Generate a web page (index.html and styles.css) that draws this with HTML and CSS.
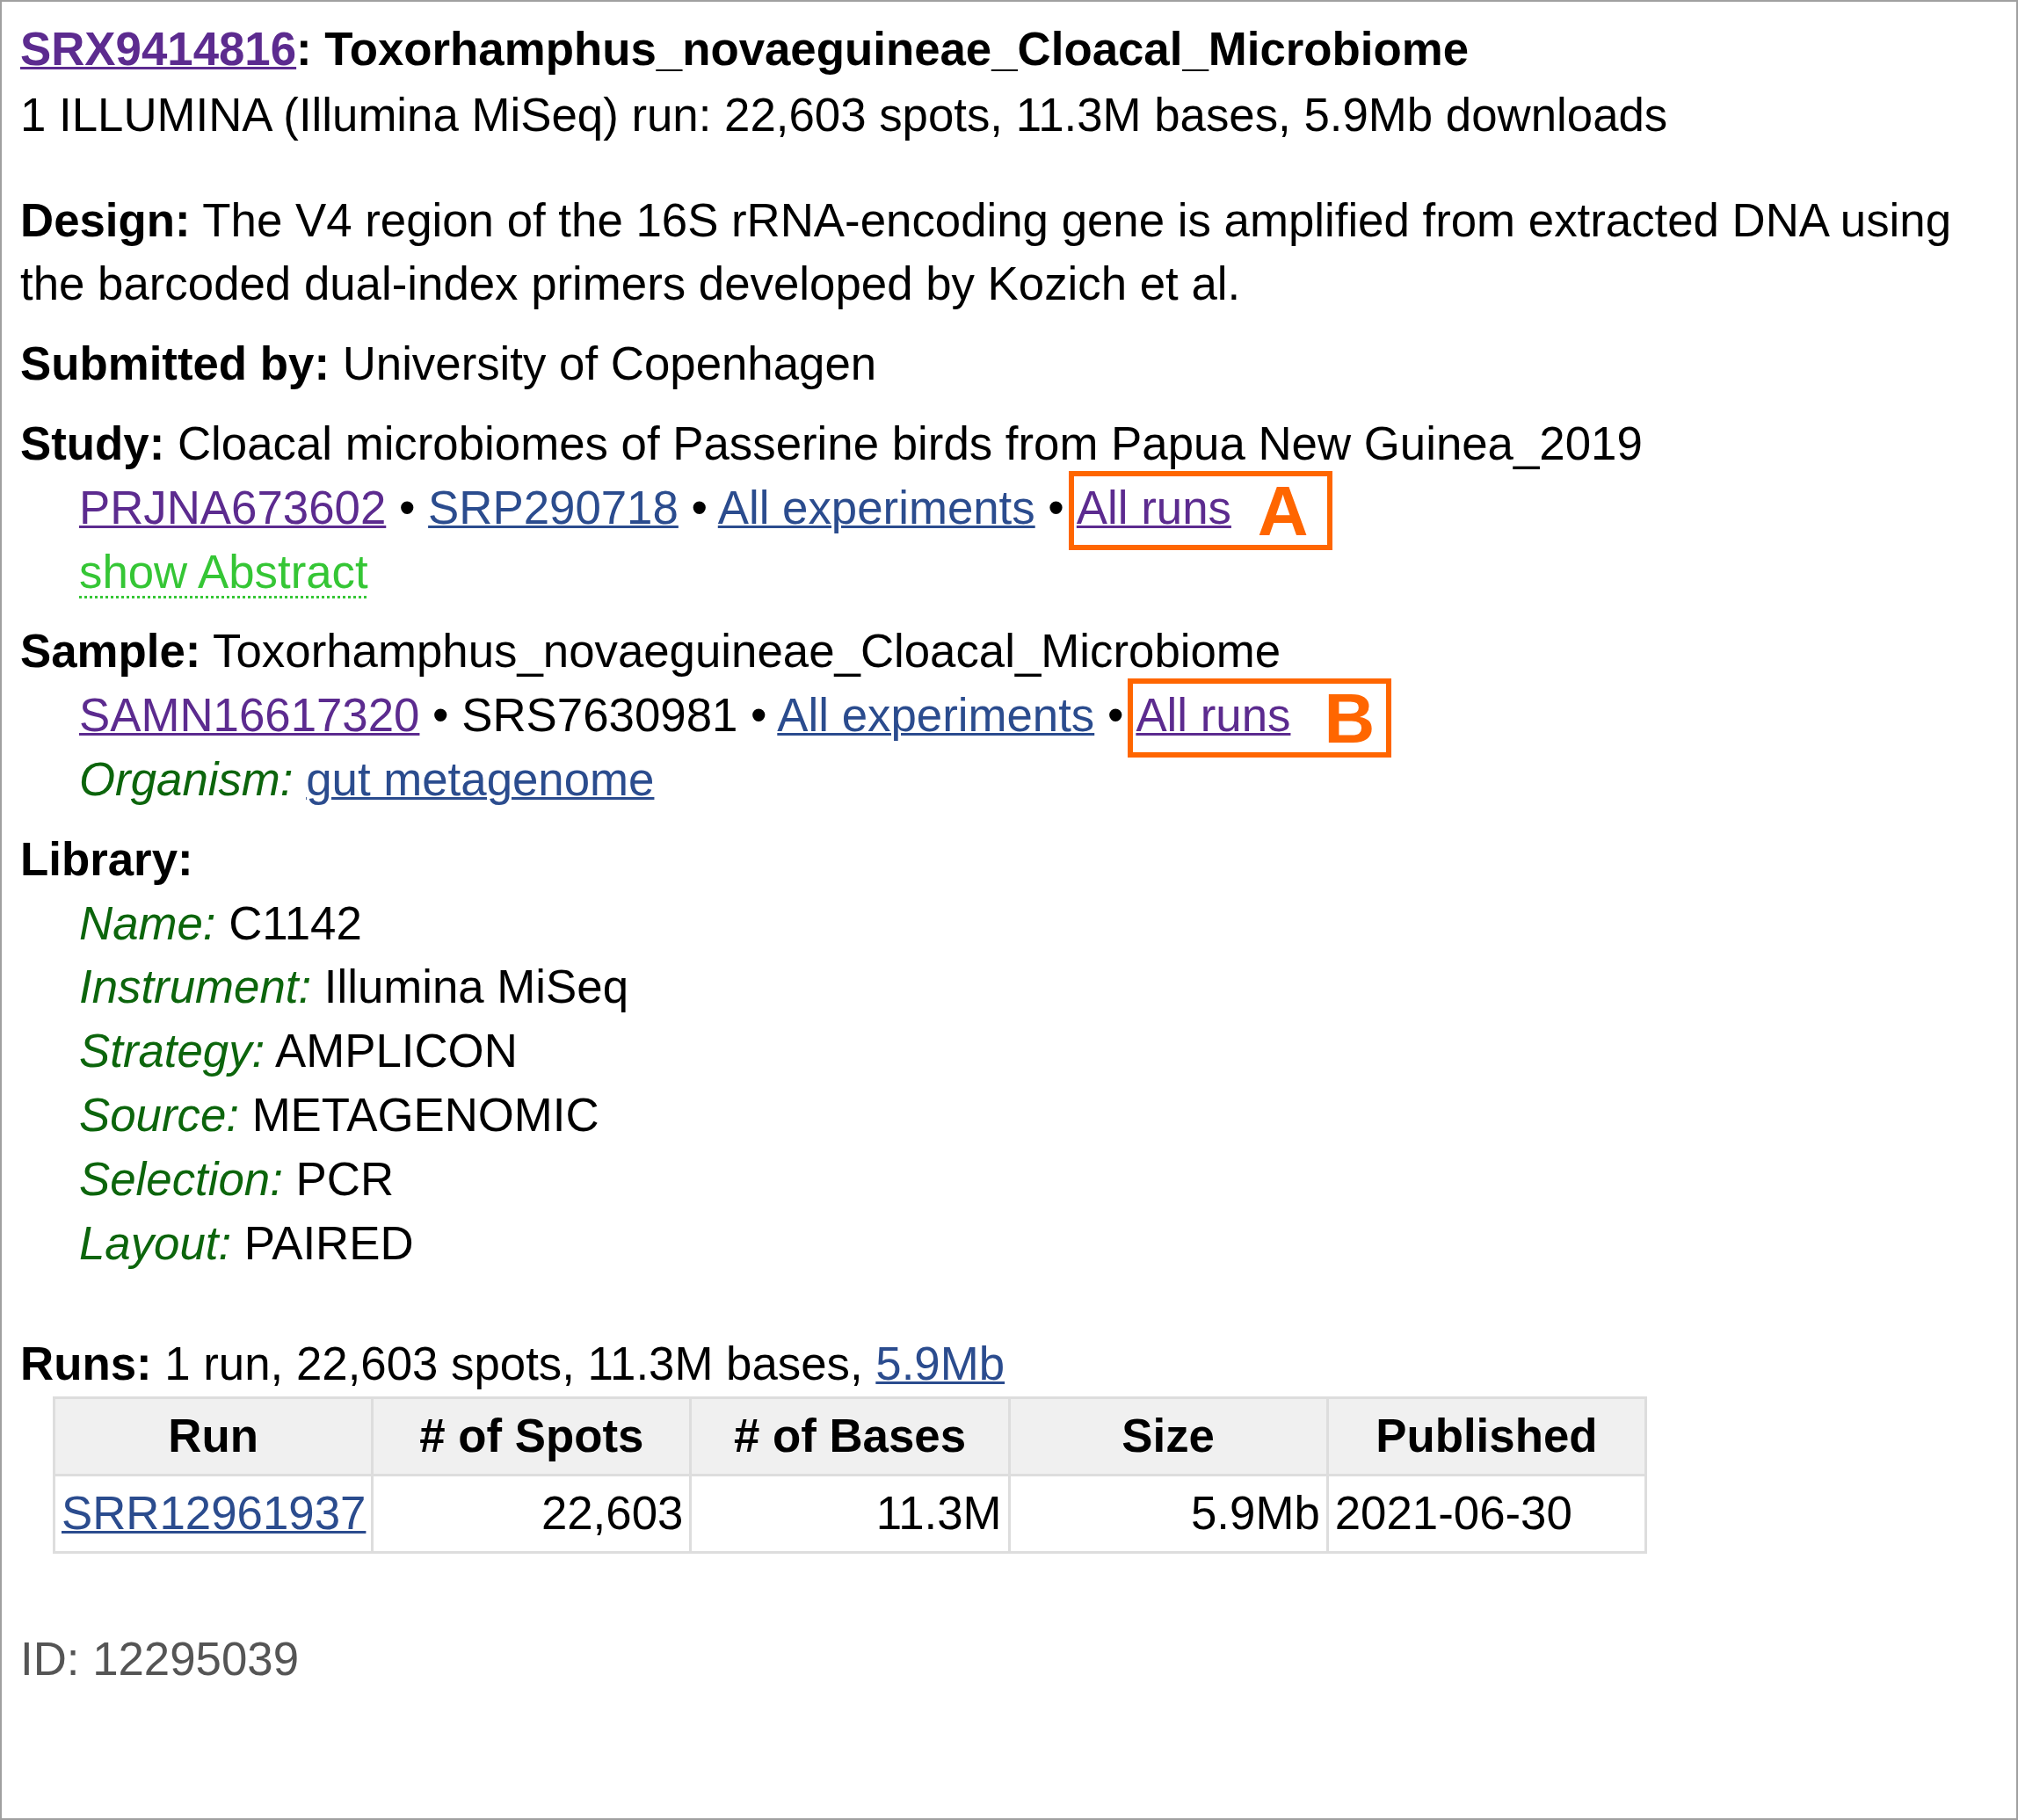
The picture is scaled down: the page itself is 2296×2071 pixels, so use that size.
FILE: index.html
```html
<!DOCTYPE html>
<html lang="en">
<head>
<meta charset="utf-8">
<title>SRX9414816: Toxorhamphus_novaeguineae_Cloacal_Microbiome</title>
<link rel="stylesheet" href="styles.css">
</head>
<body>
<div class="page">
  <div class="title"><a class="visited" href="#">SRX9414816</a>: Toxorhamphus_novaeguineae_Cloacal_Microbiome</div>
  <div class="summary">1 ILLUMINA (Illumina MiSeq) run: 22,603 spots, 11.3M bases, 5.9Mb downloads</div>

  <div class="field design"><b>Design:</b> The V4 region of the 16S rRNA-encoding gene is amplified from extracted DNA using the barcoded dual-index primers developed by Kozich et al.</div>

  <div class="field"><b>Submitted by:</b> University of Copenhagen</div>

  <div class="field">
    <div><b>Study:</b> Cloacal microbiomes of Passerine birds from Papua New Guinea_2019</div>
    <div class="sub"><a class="visited" href="#">PRJNA673602</a> • <a href="#">SRP290718</a> • <a href="#">All experiments</a> •<span class="mark mark-a"><a class="visited" href="#">All runs</a><span class="tag">A</span></span></div>
    <div class="sub"><a class="abstract" href="#">show Abstract</a></div>
  </div>

  <div class="field">
    <div><b>Sample:</b> Toxorhamphus_novaeguineae_Cloacal_Microbiome</div>
    <div class="sub"><a class="visited" href="#">SAMN16617320</a> • SRS7630981 • <a href="#">All experiments</a> •<span class="mark mark-b"><a class="visited" href="#">All runs</a><span class="tag">B</span></span></div>
    <div class="sub"><i class="key">Organism:</i> <a href="#">gut metagenome</a></div>
  </div>

  <div class="field">
    <div><b>Library:</b></div>
    <div class="sub"><i class="key">Name:</i> C1142</div>
    <div class="sub"><i class="key">Instrument:</i> Illumina MiSeq</div>
    <div class="sub"><i class="key">Strategy:</i> AMPLICON</div>
    <div class="sub"><i class="key">Source:</i> METAGENOMIC</div>
    <div class="sub"><i class="key">Selection:</i> PCR</div>
    <div class="sub"><i class="key">Layout:</i> PAIRED</div>
  </div>

  <div class="runs"><b>Runs:</b> 1 run, 22,603 spots, 11.3M bases, <a href="#">5.9Mb</a></div>
  <table class="run-table">
    <thead>
      <tr><th>Run</th><th># of Spots</th><th># of Bases</th><th>Size</th><th>Published</th></tr>
    </thead>
    <tbody>
      <tr><td><a href="#">SRR12961937</a></td><td class="num">22,603</td><td class="num">11.3M</td><td class="num">5.9Mb</td><td>2021-06-30</td></tr>
    </tbody>
  </table>

  <div class="uid">ID: 12295039</div>
</div>
</body>
</html>
```

FILE: styles.css
```css
html, body {
  margin: 0;
  padding: 0;
  background: #ffffff;
}

.page {
  box-sizing: border-box;
  width: 2296px;
  min-height: 2071px;
  border: 2px solid #a0a0a0;
  padding: 18px 21px 20px 21px;
  font-family: "Liberation Sans", Arial, sans-serif;
  font-size: 52.8px;
  line-height: 72.8px;
  color: #000000;
}

a {
  color: #2b4c8e;
  text-decoration: underline;
  text-decoration-thickness: 3px;
}

a.visited {
  color: #5c2b8f;
}

.title {
  font-weight: bold;
  margin-bottom: 2px;
}

.field {
  margin-top: 18px;
}

.design {
  margin-top: 47px;
}

.sub {
  padding-left: 67px;
}

.key {
  color: #0c650c;
}

a.abstract {
  color: #35c635;
  text-decoration: underline dotted;
  text-decoration-thickness: 3px;
  text-underline-offset: 9px;
}

.mark {
  position: relative;
  margin-left: 14px;
}

.mark::before {
  content: "";
  position: absolute;
  left: -9px;
  top: -12px;
  bottom: -19px;
  width: 300px;
  box-sizing: border-box;
  border: 6px solid #ff6600;
}

.tag {
  position: absolute;
  top: -6px;
  font-size: 80px;
  line-height: 1;
  font-weight: bold;
  color: #ff6600;
}

.mark-a .tag {
  left: 206px;
}

.mark-b .tag {
  left: 214px;
}

.runs {
  margin-top: 65px;
}

.run-table {
  margin-left: 37px;
  width: 1814px;
  table-layout: fixed;
  border-collapse: collapse;
}

.run-table th,
.run-table td {
  width: 20%;
  border: 3px solid #dddddd;
  padding: 6px 7px;
  text-align: left;
  white-space: nowrap;
}

.run-table th {
  background: #f0f0f0;
  font-weight: bold;
  text-align: center;
}

.run-table td.num {
  text-align: right;
}

.uid {
  margin-top: 84px;
  color: #555555;
}
```
